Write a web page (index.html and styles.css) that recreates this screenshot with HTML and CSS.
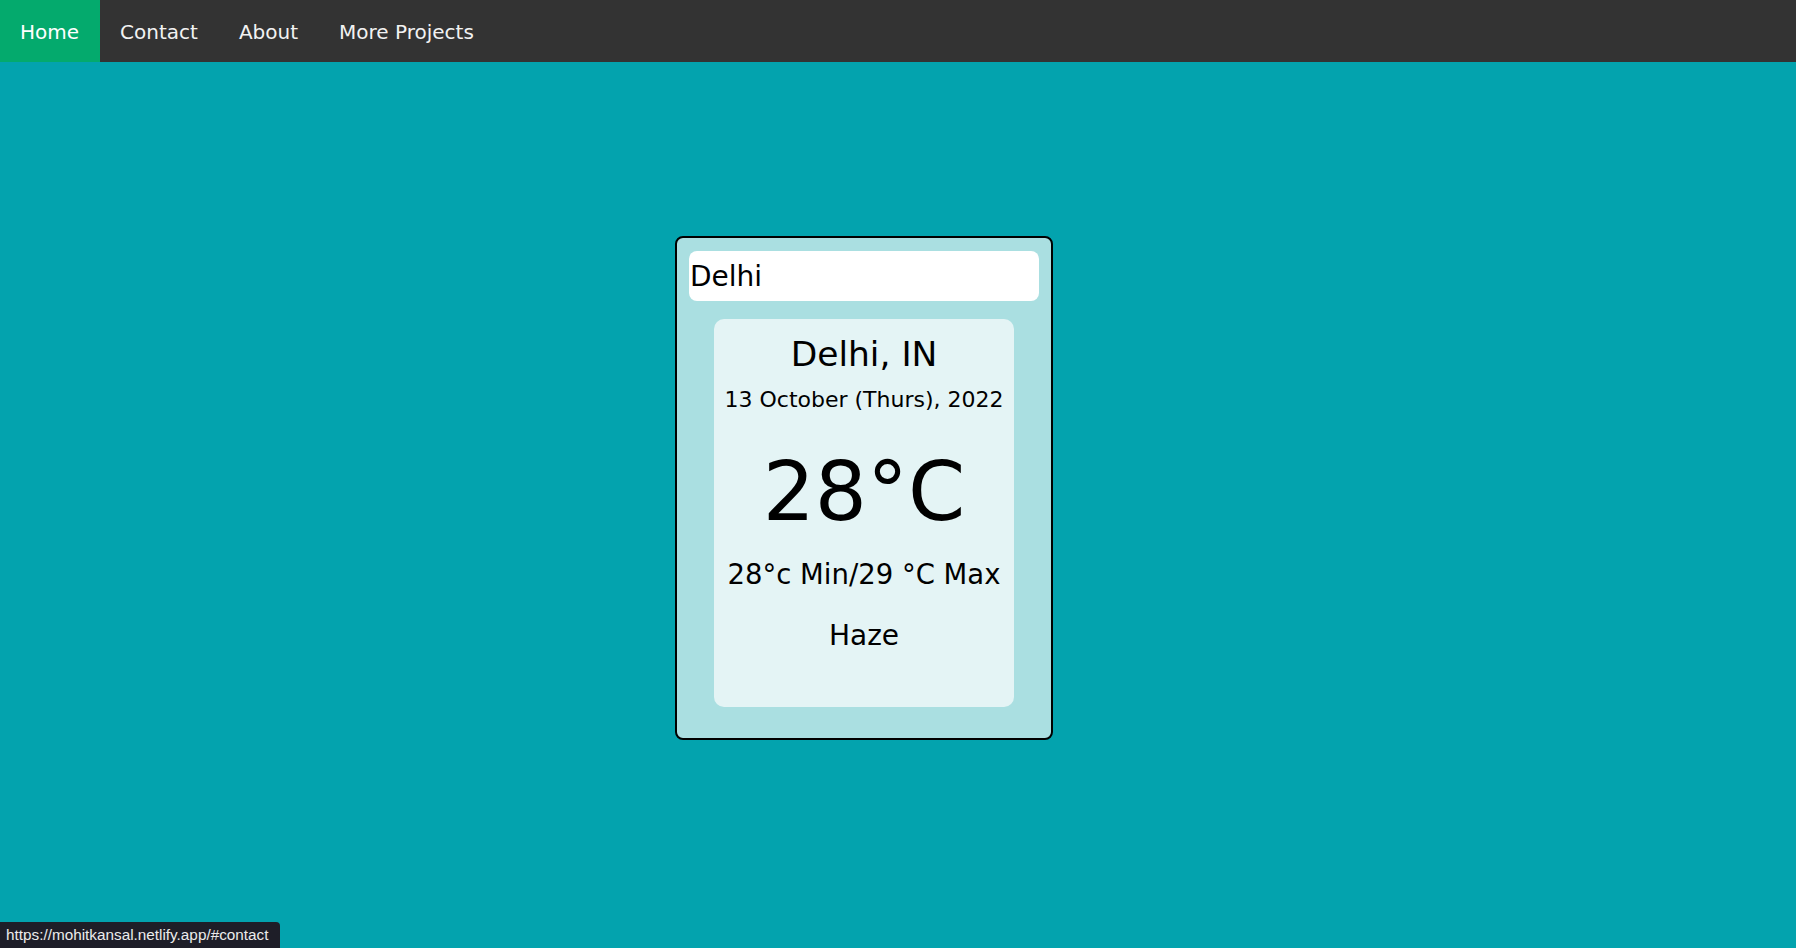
FILE: index.html
```html
<!DOCTYPE html>
<html lang="en">
<head>
<meta charset="utf-8">
<title>Weather App</title>
<link rel="stylesheet" href="styles.css">
</head>
<body>
<nav class="topnav">
  <a class="nav-link active" href="#home">Home</a>
  <a class="nav-link" href="#contact">Contact</a>
  <a class="nav-link" href="#about">About</a>
  <a class="nav-link" href="#projects">More Projects</a>
</nav>
<main class="page">
  <section class="card">
    <input class="search" type="text" value="Delhi">
    <div class="weather">
      <div class="city">Delhi, IN</div>
      <div class="date">13 October (Thurs), 2022</div>
      <div class="temp">28°C</div>
      <div class="minmax">28°c Min/29 °C Max</div>
      <div class="cond">Haze</div>
    </div>
  </section>
</main>
<div class="status">https://mohitkansal.netlify.app/#contact</div>
</body>
</html>
```
FILE: styles.css
```css
html, body {
  margin: 0;
  padding: 0;
  height: 100%;
}
body {
  background: #03a3ae;
  font-family: "DejaVu Sans", "Noto Sans", sans-serif;
  color: #000;
  overflow: hidden;
}
.topnav {
  display: flex;
  background: #333333;
  height: 62px;
}
.nav-link {
  display: flex;
  align-items: center;
  padding: 1px 21px 0 20px;
  color: #f2f2f2;
  text-decoration: none;
  font-size: 20px;
}
.nav-link.active {
  background: #04aa6d;
  color: #fff;
}
.page {
  display: flex;
  padding: 174px 0 0 675px;
}
.card {
  width: 350px;
  height: 487px;
  padding: 13px 12px 0 12px;
  background: #aadfe1;
  border: 2px solid #000;
  border-radius: 8px;
  display: flex;
  flex-direction: column;
  align-items: center;
}
.search {
  box-sizing: border-box;
  width: 350px;
  height: 50px;
  border: none;
  border-radius: 8px;
  background: #fff;
  padding: 0 1px;
  font-family: inherit;
  font-size: 28px;
  color: #000;
  outline: none;
}
.weather {
  box-sizing: border-box;
  width: 300px;
  height: 388px;
  margin-top: 18px;
  padding-top: 12px;
  background: #e4f4f5;
  border-radius: 10px;
  text-align: center;
}
.city {
  font-size: 34.5px;
  line-height: 46px;
}
.date {
  margin-top: 8px;
  font-size: 22px;
  line-height: 30px;
}
.temp {
  margin-top: 29px;
  font-size: 82px;
  line-height: 96px;
}
.minmax {
  margin-top: 16px;
  font-size: 27.5px;
  line-height: 36px;
}
.cond {
  margin-top: 26px;
  font-size: 28px;
  line-height: 36px;
}
.status {
  position: fixed;
  left: 0;
  bottom: 0;
  height: 26px;
  width: 274px;
  padding-left: 6px;
  background: #1e1e28;
  color: #ececec;
  border-top-right-radius: 4px;
  font-family: "Liberation Sans", Arial, sans-serif;
  font-size: 15.3px;
  line-height: 26px;
  white-space: nowrap;
}
```
